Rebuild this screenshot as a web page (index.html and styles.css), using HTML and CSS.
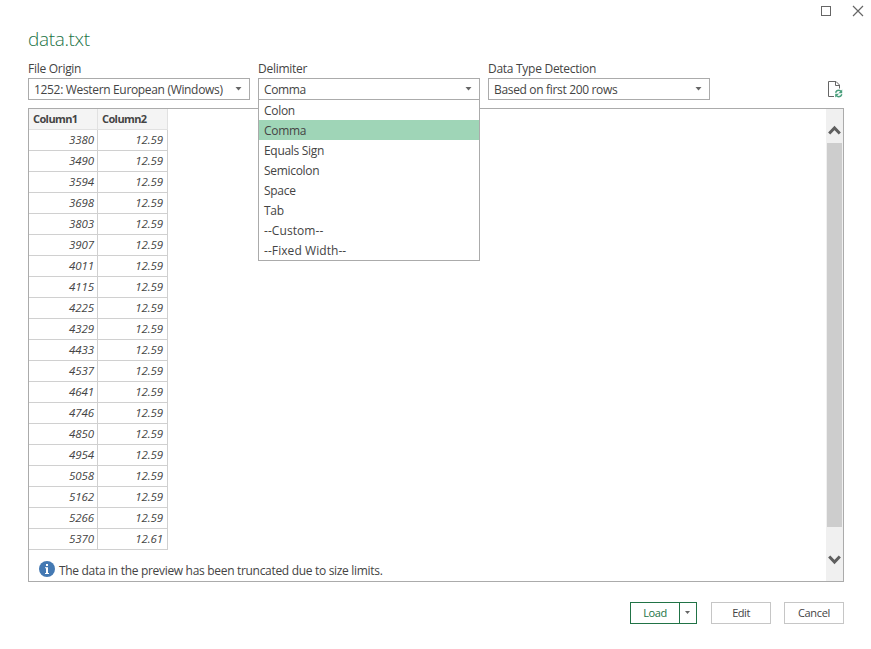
FILE: index.html
```html
<!DOCTYPE html>
<html lang="en">
<head>
<meta charset="utf-8">
<title>data.txt</title>
<link rel="stylesheet" href="styles.css">
</head>
<body>
<div class="dialog">
  <div class="titlebar">
    <svg class="win-icon" width="12" height="12" viewBox="0 0 12 12"><rect x="1.5" y="1.5" width="9" height="9" fill="none" stroke="#666"/></svg>
    <svg class="win-icon" width="12" height="12" viewBox="0 0 12 12"><path d="M1 1l10 10M11 1L1 11" fill="none" stroke="#666" stroke-width="1.2"/></svg>
  </div>
  <h1 class="title">data.txt</h1>
  <div class="options">
    <div class="field">
      <div class="label">File Origin</div>
      <div class="combo"><span class="tight">1252: Western European (Windows)</span><svg width="7" height="4" viewBox="0 0 7 4"><path d="M0.5 0h6L3.5 3.5z" fill="#666"/></svg></div>
    </div>
    <div class="field">
      <div class="label">Delimiter</div>
      <div class="combo"><span class="value">Comma</span><svg width="7" height="4" viewBox="0 0 7 4"><path d="M0.5 0h6L3.5 3.5z" fill="#666"/></svg></div>
      <ul class="menu">
        <li>Colon</li>
        <li class="selected">Comma</li>
        <li>Equals Sign</li>
        <li>Semicolon</li>
        <li>Space</li>
        <li>Tab</li>
        <li class="wide">--Custom--</li>
        <li class="wide">--Fixed Width--</li>
      </ul>
    </div>
    <div class="field">
      <div class="label">Data Type Detection</div>
      <div class="combo"><span class="tight">Based on first 200 rows</span><svg width="7" height="4" viewBox="0 0 7 4"><path d="M0.5 0h6L3.5 3.5z" fill="#666"/></svg></div>
    </div>
    <svg class="refresh" width="15" height="17" viewBox="0 0 15 17" fill="none">
      <path d="M6 15.5H0.5v-15h7.5l3.5 3.5v3.5M7.5 0.5v4h4" stroke="#666"/>
      <path d="M7.6 11.8c.5-1.8 1.8-2.5 3.2-2.5 1.1 0 1.8.5 2.4 1.4M13.8 13.2c-.5 1.8-1.8 2.5-3.2 2.5-1.1 0-1.8-.5-2.4-1.4" stroke="#4a9f7c" stroke-width="1.4"/>
      <path d="M14.2 8.4v3.8h-3.8zM7.2 16.6v-3.8H11z" fill="#4a9f7c"/>
    </svg>
  </div>
  <div class="preview">
    <div class="content">
      <table class="grid">
        <thead><tr><th>Column1</th><th>Column2</th></tr></thead>
        <tbody>
          <tr><td>3380</td><td>12.59</td></tr>
          <tr><td>3490</td><td>12.59</td></tr>
          <tr><td>3594</td><td>12.59</td></tr>
          <tr><td>3698</td><td>12.59</td></tr>
          <tr><td>3803</td><td>12.59</td></tr>
          <tr><td>3907</td><td>12.59</td></tr>
          <tr><td>4011</td><td>12.59</td></tr>
          <tr><td>4115</td><td>12.59</td></tr>
          <tr><td>4225</td><td>12.59</td></tr>
          <tr><td>4329</td><td>12.59</td></tr>
          <tr><td>4433</td><td>12.59</td></tr>
          <tr><td>4537</td><td>12.59</td></tr>
          <tr><td>4641</td><td>12.59</td></tr>
          <tr><td>4746</td><td>12.59</td></tr>
          <tr><td>4850</td><td>12.59</td></tr>
          <tr><td>4954</td><td>12.59</td></tr>
          <tr><td>5058</td><td>12.59</td></tr>
          <tr><td>5162</td><td>12.59</td></tr>
          <tr><td>5266</td><td>12.59</td></tr>
          <tr><td>5370</td><td>12.61</td></tr>
        </tbody>
      </table>
      <div class="notice">
        <svg width="16" height="16" viewBox="0 0 16 16"><circle cx="8" cy="8" r="8" fill="#4479b3"/><path d="M7 3h2v2H7zM6 6.2h3V12h1v1H6v-1h1V7.2H6z" fill="#fff"/></svg>
        <span>The data in the preview has been truncated due to size limits.</span>
      </div>
    </div>
    <div class="scrollbar">
      <svg width="13" height="10" viewBox="0 0 13 10"><path d="M1.2 8.5L6.5 3l5.3 5.5" fill="none" stroke="#5f5f5f" stroke-width="3"/></svg>
      <div class="thumb"></div>
      <svg class="down" width="13" height="10" viewBox="0 0 13 10"><path d="M1.2 1.5L6.5 7l5.3-5.5" fill="none" stroke="#5f5f5f" stroke-width="3"/></svg>
    </div>
  </div>
  <div class="actions">
    <div class="split"><button class="load">Load</button><button class="more" aria-label="Load options"><svg width="7" height="4" viewBox="0 0 7 4"><path d="M1 0h5L3.5 3z" fill="#666"/></svg></button></div>
    <button class="btn">Edit</button>
    <button class="btn cancel">Cancel</button>
  </div>
</div>
</body>
</html>
```
FILE: styles.css
```css
* { box-sizing: border-box; }

body {
  margin: 0;
  background: #fff;
  color: #444;
  font: 12px/16px "Open Sans", "Noto Sans", sans-serif;
  letter-spacing: -0.25px;
}

svg { display: block; flex: none; }

.dialog {
  width: 871px;
  height: 649px;
  padding: 0 27px 0 28px;
  display: flex;
  flex-direction: column;
}

.titlebar {
  height: 22px;
  margin-right: -20px;
  display: flex;
  justify-content: flex-end;
  align-items: center;
  gap: 20px;
}

.title {
  margin: 0;
  height: 39px;
  padding-top: 3px;
  font-size: 19px;
  line-height: 28px;
  font-weight: 300;
  color: #217346;
  letter-spacing: -0.35px;
}

.options {
  display: flex;
  gap: 8px;
  height: 39px;
}

.field { position: relative; width: 222px; }

.label { height: 17px; letter-spacing: -0.28px; }

.combo {
  height: 22px;
  border: 1px solid #ababab;
  background: #fff;
  padding: 1px 7px 0 5px;
  display: flex;
  align-items: center;
  justify-content: space-between;
}

.combo svg { margin-top: -1px; }

.tight { letter-spacing: -0.33px; }

.value { letter-spacing: -0.4px; }

.menu {
  position: absolute;
  z-index: 2;
  top: 38px;
  left: 0;
  width: 222px;
  margin: 0;
  padding: 0;
  list-style: none;
  border: 1px solid #ababab;
  background: #fff;
  letter-spacing: -0.3px;
}

.menu li { height: 20px; padding: 2px 5px 0; line-height: 18px; }

.menu .wide { letter-spacing: 0.07px; }

.menu .selected { background: #9fd5b7; }

.refresh { margin: 20px 1px 0 auto; }

.preview {
  height: 474px;
  margin-top: 8px;
  border: 1px solid #ababab;
  display: flex;
}

.content { flex: 1; }

.grid {
  border-collapse: separate;
  border-spacing: 0;
  table-layout: fixed;
  width: 139px;
  font-size: 11px;
}

.grid th, .grid td {
  height: 21px;
  padding: 0 4px;
  border-right: 1px solid #d0d0d0;
  border-bottom: 1px solid #d0d0d0;
  line-height: 18px;
}

.grid th:first-child { width: 69px; }

.grid th {
  background: #f4f4f4;
  text-align: left;
  font-weight: 700;
  border-color: #e1e1e1;
  letter-spacing: -0.6px;
}

.grid td {
  padding-right: 3px;
  text-align: right;
  font-size: 11.5px;
  font-style: italic;
  letter-spacing: -0.1px;
}

.grid td:last-child { padding-right: 4px; }

.notice {
  display: flex;
  gap: 4px;
  margin: 11px 0 0 10px;
}

.notice span { padding-top: 2px; letter-spacing: -0.31px; }

.scrollbar {
  width: 17px;
  background: #f0f0f0;
  display: flex;
  flex-direction: column;
  align-items: center;
  padding: 16px 0;
}

.thumb { width: 15px; height: 384px; margin-top: 8px; background: #cdcdcd; }

.down { margin-top: 28px; }

.actions {
  display: flex;
  justify-content: flex-end;
  margin-top: 20px;
  font-size: 11px;
  letter-spacing: -0.45px;
}

.actions button {
  font: inherit;
  letter-spacing: inherit;
  color: #444;
  background: #fff;
  border: 1px solid #c6c6c6;
  padding: 0;
  height: 22px;
}

.actions .btn { width: 60px; margin-left: 14px; }

.actions .cancel { margin-left: 13px; letter-spacing: -0.35px; }

.split { display: flex; }

.actions .load { width: 50px; border-color: #217346; color: #217346; }

.actions .more {
  width: 18px;
  margin-left: -1px;
  padding-right: 1px;
  border-color: #217346;
  display: flex;
  justify-content: center;
  align-items: center;
}
```
